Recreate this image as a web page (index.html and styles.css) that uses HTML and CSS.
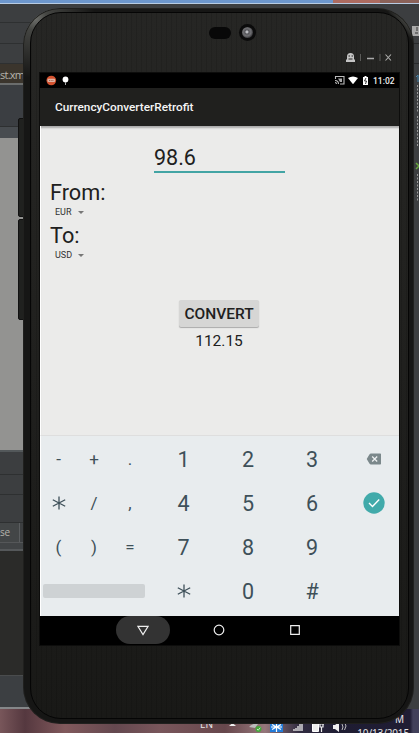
FILE: index.html
```html
<!DOCTYPE html>
<html lang="en">
<head>
<meta charset="utf-8">
<title>CurrencyConverterRetrofit</title>
<link rel="stylesheet" href="styles.css">
</head>
<body>
<div class="desktop">
  <div class="window-edge"></div>
  <div class="ide">
    <div class="ide-left">
      <div class="bar menu"></div>
      <div class="bar tools"></div>
      <div class="bar crumbs"></div>
      <div class="bar file-tab">st.xm</div>
      <div class="bar panel-head"></div>
      <div class="bar panel-sub"></div>
      <div class="bar canvas"></div>
      <div class="bar row-a"></div>
      <div class="bar row-b"></div>
      <div class="bar row-c"></div>
      <div class="bar bottom-tab"><span>se</span></div>
      <div class="bar splitter"></div>
      <div class="bar console"></div>
      <div class="bar status"></div>
    </div>
    <div class="ide-right">
      <svg width="7" height="705" viewBox="412 4 7 705">
        <path d="M412 26h7v10h-7z" fill="#aaa"/><path d="M417 27v4m-2 2h3" stroke="#333"/>
        <path d="M412 43.500h7M412 63.500h7" stroke="#292a2b"/>
        <path d="M416 77l2-2v7" fill="none" stroke="#4785ad"/>
        <path d="M417.500 85v28m0 3v30m0 28v27" stroke="#999" stroke-dasharray="2 1.500"/>
        <path d="M416 163l3 3-3 3" fill="none" stroke="#69a83c" stroke-width="1.500"/>
      </svg>
    </div>
  </div>
  <div class="taskbar">
    <span class="lang">EN</span>
    <svg class="tray" width="125" height="24" viewBox="225 709 125 24">
      <path d="M229 726l3.500-3 3.500 3z" fill="#eee"/>
      <path d="M249 727q5-5 9-3l-3 4z" fill="#bbb"/><circle cx="258.500" cy="729" r="3" fill="#45a83b"/><path d="M257 729l1.200 1.200 2-2.500" fill="none" stroke="#dfd" stroke-width=".8"/>
      <path d="M270 722h13v10h-13z" fill="#237bd8"/><path d="M276.500 722v10M272 724.500l9 5m0-5l-9 5M271 727h11" stroke="#fff" stroke-width="1.200"/>
      <path d="M294 731v-2m2 2v-3m2 3v-5m2 5v-7m2 7v-9" stroke="#eee" stroke-width="1.300"/>
      <path d="M312.500 723.500h6v8h-6z" fill="#eee" stroke="#fff"/><path d="M319 724h5m-4 0v3h3v-3m-1.500 3v5" fill="none" stroke="#eee" stroke-width="1.200"/>
      <path d="M333 725h2l4-3v10l-4-3h-2z" fill="#eee"/><path d="M342 724q2 3 0 6m2.500-8q3 4 0 8" fill="none" stroke="#bbb"/>
    </svg>
    <div class="clock"><span class="meridiem">M</span><span>10/13/2015</span></div>
  </div>
</div>

<div class="phone-wrap">
  <div class="side-button upper"></div>
  <div class="side-button lower"></div>
  <div class="phone">
    <div class="face">
      <div class="top-bezel">
        <div class="sensors">
          <span class="speaker"></span>
          <span class="camera"><i></i></span>
        </div>
        <svg class="controls" width="48" height="10" viewBox="345 53 48 10">
          <path d="M347 59v-2.500a3.500 3.500 0 0 1 7 0V59l1 1v2h-9v-2z" fill="#c4c4c4"/><path d="M348.500 56h1.500m1.500 0h1.500M348.500 59h4" stroke="#252523"/>
          <path d="M360.500 54v7m19.500-7v7" stroke="#5b5b59"/>
          <path d="M367 58.500h7" stroke="#aaa" stroke-width="1.500"/>
          <path d="M385.500 54.500l5.500 6m0-6l-5.500 6" stroke="#b0b0ae" stroke-width="1.100"/>
        </svg>
      </div>
      <div class="screen">
        <div class="statusbar">
          <svg width="24" height="15" viewBox="45 73 24 15">
            <circle cx="51.300" cy="80.500" r="4.800" fill="#d5522f"/><rect x="47.500" y="78.700" width="7.600" height="3.300" rx="1" fill="#dfb3a4"/><path d="M49 80.500h5" stroke="#a76451" stroke-dasharray="1 .7"/>
            <circle cx="65.500" cy="79.500" r="2.900" fill="#fff"/><path d="M65.500 82v3" stroke="#aaa"/>
          </svg>
          <div class="status-right">
            <svg width="35" height="15" viewBox="334 73 35 15">
              <path d="M335.500 79v-2.500h8.500v7.500h-4M335 80.500q3.500 0 3.500 3.500m-3.500-1.500q1.500 0 1.500 1.500" fill="none" stroke="#bbb" stroke-width="1.100"/><path d="M338 78.500h4v3.500h-2z" fill="#aaa"/>
              <path d="M348 78q5-3.200 10 0l-5 6.200z" fill="#fff"/>
              <path d="M363 77h1.500v-1h2v1h1.500v8h-5z" fill="#fff"/><path d="M366 78l-1.500 3h2l-1 3" fill="none" stroke="#222" stroke-width=".9"/>
            </svg>
            <span class="time">11:02</span>
          </div>
        </div>
        <div class="appbar">CurrencyConverterRetrofit</div>
        <div class="content">
          <div class="amount">98.6</div>
          <div class="label">From:</div>
          <div class="spinner"><span>EUR</span><i></i></div>
          <div class="label">To:</div>
          <div class="spinner"><span>USD</span><i></i></div>
          <div class="convert">CONVERT</div>
          <div class="result">112.15</div>
        </div>
        <div class="keyboard">
          <span class="sym">-</span><span class="sym">+</span><span class="sym">.</span>
          <span class="num">1</span><span class="num">2</span><span class="num">3</span>
          <span class="act"><svg width="16" height="12" viewBox="0 0 16 12"><path d="M5 .5h9.300q.7 0 .7.700v9.600q0 .7-.7.700H5Q4 11.500 3.400 10.500L.7 6l2.700-4.500Q4 .5 5 .5z" fill="#7b888b"/><path d="M6.200 3.500l5 5m0-5l-5 5" stroke="#eef1f2" stroke-width="1.300"/></svg></span>

          <span class="sym"><svg class="star" width="14" height="14" viewBox="0 0 14 14"><path d="M7 .5v13M.8 3.700l12.400 6.600M.8 10.300l12.400-6.600"/></svg></span><span class="sym">/</span><span class="sym">,</span>
          <span class="num">4</span><span class="num">5</span><span class="num">6</span>
          <span class="act"><svg width="22" height="22" viewBox="0 0 22 22"><circle cx="11" cy="11" r="10.700" fill="#41aaaa"/><path d="M6 11l3.500 3.500 6.700-7" fill="none" stroke="#fff" stroke-width="1.400"/></svg></span>

          <span class="sym">(</span><span class="sym">)</span><span class="sym">=</span>
          <span class="num">7</span><span class="num">8</span><span class="num">9</span>
          <span class="act"></span>

          <span class="space"></span>
          <span class="num"><svg class="star" width="14" height="14" viewBox="0 0 14 14"><path d="M7 .5v13M.8 3.700l12.400 6.600M.8 10.300l12.400-6.600"/></svg></span><span class="num">0</span><span class="num">#</span>
          <span class="act"></span>
        </div>
        <div class="navbar">
          <span class="nav back"><svg width="12" height="11" viewBox="0 0 12 11"><path d="M.9 1.400h10.200L6 9.600z"/></svg></span>
          <span class="nav"><svg width="12" height="12" viewBox="0 0 12 12"><circle cx="6" cy="6" r="4.800"/></svg></span>
          <span class="nav"><svg width="10" height="10" viewBox="0 0 10 10"><path d="M.7.700h8.600v8.600H.7z"/></svg></span>
        </div>
      </div>
    </div>
  </div>
</div>
</body>
</html>
```
FILE: styles.css
```css
* { box-sizing: border-box; }
body {
  margin: 0;
  width: 419px;
  height: 733px;
  overflow: hidden;
  position: relative;
  font-family: Roboto, "Liberation Sans", sans-serif;
}
svg { display: block; flex: none; }

/* Desktop behind the emulator */
.desktop { display: flex; flex-direction: column; width: 419px; height: 733px; overflow: hidden; }
.window-edge {
  height: 4px;
  flex: none;
  background: linear-gradient(90deg, transparent 333px, #ad6b60 333px 380px, #8b6259 380px), #6d97cd;
  border-bottom: 1px solid #b8cce3;
}
.ide { display: flex; justify-content: space-between; height: 705px; flex: none; background: #3c3e40; }
.ide-left { width: 70px; display: flex; flex-direction: column; }
.ide-right { width: 7px; }
.bar { flex: none; border-bottom: 1px solid #2e3031; font: 12px "Open Sans", sans-serif; color: #b4b2ab; }
.menu { height: 19px; }
.tools { height: 21px; }
.crumbs { height: 20px; }
.file-tab { height: 21px; font-size: 11px; line-height: 22px; letter-spacing: -.75px; background: #3b352d; border-bottom: 2px solid #6b6d6d; }
.panel-head { height: 42px; background: #3b3e42; }
.panel-sub { height: 11px; background: #484c50; border: 0; }
.canvas { height: 314px; background: #939391; border-bottom: 2px solid #53585a; }
.row-a { height: 23px; }
.row-b { height: 20px; }
.row-c { height: 28px; }
.bottom-tab { height: 20px; border-color: #555759; }
.bottom-tab span { display: block; width: 20px; height: 19px; line-height: 19px; font-size: 10px; letter-spacing: -.2px; background: #434647; border-right: 1px solid #5b5e60; }
.splitter { height: 8px; background: #414446; border-bottom: 2px solid #55585a; }
.console { height: 125px; background: #2b2b29; border-color: #4a4c4d; }
.status { flex: 1; background: #3c3f42; border-bottom: 2px solid #858789; }
.taskbar {
  height: 24px;
  flex: none;
  display: flex;
  align-items: flex-end;
  background: linear-gradient(90deg, #78565a 0, #55383f 25px, #81595c 65px, #64484f 115px, #79565b 160px, #67474c 225px, #96777b 265px, #302b40 300px, #1e1c32 340px, #201d34 410px, #42405a 413px);
  color: #e4e4e6;
  font-family: "Noto Sans", sans-serif;
}
.lang { width: 25px; margin: 0 0 2px 200px; font-size: 10px; line-height: 14px; }
.clock { display: flex; flex-direction: column; align-items: flex-end; align-self: flex-start; width: 59px; height: 24px; padding-top: 3px; font-size: 10px; line-height: 14px; letter-spacing: -.15px; white-space: nowrap; }
.meridiem { margin-right: 5px; }

/* Emulator frame */
.phone-wrap { position: absolute; left: 18px; top: 8px; width: 396px; height: 716px; padding-left: 5px; }
.side-button { position: absolute; left: 0; width: 7px; background: #20211f; border: 1px solid #111; border-radius: 2px 0 0 2px; }
.upper { top: 110px; height: 99px; }
.lower { top: 211px; height: 101px; }
.phone {
  position: relative;
  width: 391px;
  height: 716px;
  padding: 4px 5px 5px 7px;
  border-radius: 37px;
  background: linear-gradient(50deg, transparent 97%, #454643 98%), radial-gradient(circle at 12px 10px, #70716d 0, #454643 12px, transparent 60px), #161615;
  box-shadow: inset 0 0 0 1px #20201e;
}
.face {
  height: 707px;
  padding: 0 10px;
  border: 1px solid #050505;
  border-radius: 31px;
  background: repeating-linear-gradient(90deg, rgba(0,0,0,.12) 0 1px, transparent 1px 5px), linear-gradient(#262624, #20201e 50%, #191917);
  overflow: hidden;
}
.top-bezel { height: 60px; padding: 11px 5px 0 0; display: flex; flex-direction: column; align-items: flex-end; justify-content: space-between; }
.sensors { display: flex; align-items: center; gap: 8px; margin-right: 137px; }
.speaker { width: 22px; height: 12px; border-radius: 6px; background: #080808; }
.camera { display: grid; place-items: center; width: 17px; height: 17px; border-radius: 50%; background: #0b0b0b; }
.camera i { width: 11px; height: 11px; border-radius: 50%; background: radial-gradient(circle at 45% 45%, #bbbcc0 0 1px, #55555a 2px, #707073 4px, #39393c 6px); }
.controls { margin-bottom: 10px; }

/* App screen */
.screen { width: 359px; height: 572px; margin-left: -1px; display: flex; flex-direction: column; outline: 1px solid #0d0d0c; }
.statusbar { height: 15px; background: #000; display: flex; justify-content: space-between; padding: 0 5px; flex: none; }
.status-right { display: flex; gap: 4px; }
.time { font-size: 8.500px; font-weight: 500; line-height: 16px; color: #eee; width: 21px; white-space: nowrap; }
.appbar { height: 38px; flex: none; background: #20201e; color: #f5f5f5; font-size: 11.800px; font-weight: 500; line-height: 39px; padding-left: 15px; }
.content { height: 309px; flex: none; background: #ebebea; border-left: 1px solid #fff; box-shadow: inset 0 3px 2px -1px #aaa; padding: 17px 0 0 9px; color: #202020; display: flex; flex-direction: column; }
.amount { width: 131px; height: 30px; margin-left: 104px; border-bottom: 2px solid #42a4a4; font-size: 21.500px; line-height: 29px; }
.label { height: 27px; margin-top: 6px; font-size: 21.700px; line-height: 28px; }
.spinner { height: 13px; padding: 0 0 0 5px; display: flex; align-items: center; font-size: 9px; line-height: 13px; color: #333; }
.spinner span { width: 23px; }
.spinner i { border: 3px solid transparent; border-top-color: #777; border-bottom: 0; }
.spinner + .label { margin-top: 3px; }
.convert { width: 80px; height: 27px; margin: 38px 0 0 129px; border-radius: 2px; background: #d6d6d5; box-shadow: 0 1px 1px #aaa; font-size: 15.500px; font-weight: 500; line-height: 28px; text-align: center; }
.result { width: 80px; height: 18px; margin: 4px 0 0 129px; font-size: 15.500px; line-height: 20px; text-align: center; }

.keyboard {
  height: 181px;
  flex: none;
  display: grid;
  grid-template-columns: 35px 36px 39px 65px 64px 64px 1fr;
  grid-template-rows: repeat(4, 44px);
  padding-top: 1px;
  background: #e8ecee;
  border-left: 1px solid #fff;
  border-top: 1px solid #dedede;
  color: #3e5059;
}
.keyboard span { display: flex; align-items: center; justify-content: center; }
.sym { font-size: 17px; }
.sym:nth-child(7n + 3) { padding-right: 3px; }
.num { font-size: 21.500px; }
.act { padding-left: 4px; }
.star { fill: none; stroke: #3e5059; stroke-width: 1.300; }
.keyboard .space { grid-column: 1 / 4; align-self: center; width: 102px; height: 14px; margin-left: 2px; border-radius: 2px; background: #ced2d4; }

.navbar { height: 29px; flex: none; display: flex; justify-content: center; gap: 22px; padding-right: 1px; background: #000; }
.nav { width: 54px; height: 28px; border-radius: 14px; display: flex; align-items: center; justify-content: center; }
.back { background: #333; }
.nav svg { fill: none; stroke: #eee; stroke-width: 1.200; }
```
